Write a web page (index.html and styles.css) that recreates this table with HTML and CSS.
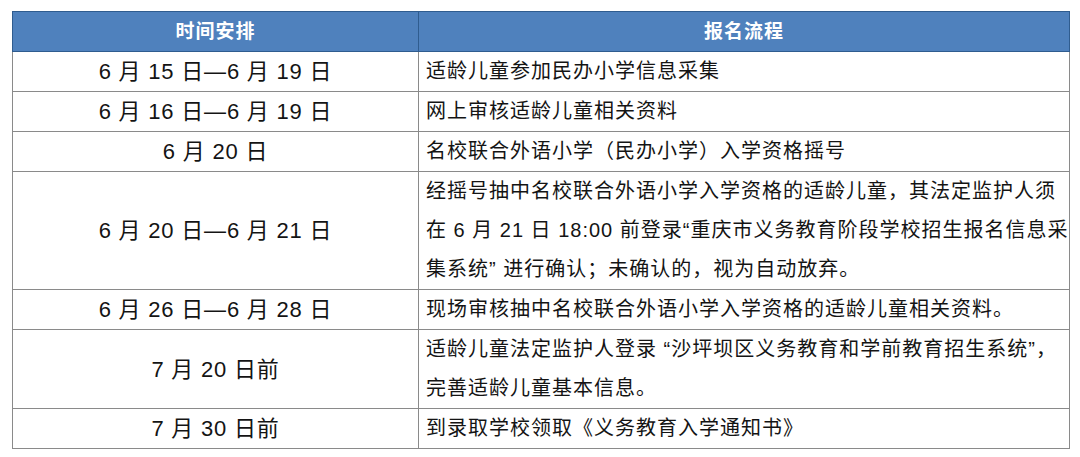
FILE: index.html
```html
<!DOCTYPE html>
<html lang="zh-CN">
<head>
<meta charset="utf-8">
<title>报名流程</title>
<link rel="stylesheet" href="styles.css">
</head>
<body>
<table class="schedule">
  <colgroup>
    <col class="col-time">
    <col class="col-flow">
  </colgroup>
  <thead>
    <tr>
      <th>时间安排</th>
      <th>报名流程</th>
    </tr>
  </thead>
  <tbody>
    <tr>
      <td class="time">6 月 15 日—6 月 19 日</td>
      <td class="flow">适龄儿童参加民办小学信息采集</td>
    </tr>
    <tr>
      <td class="time">6 月 16 日—6 月 19 日</td>
      <td class="flow">网上审核适龄儿童相关资料</td>
    </tr>
    <tr>
      <td class="time">6 月 20 日</td>
      <td class="flow">名校联合外语小学（民办小学）入学资格摇号</td>
    </tr>
    <tr>
      <td class="time">6 月 20 日—6 月 21 日</td>
      <td class="flow">经摇号抽中名校联合外语小学入学资格的适龄儿童，其法定监护人须<br>在 6 月 21 日 18:00 前登录“重庆市义务教育阶段学校招生报名信息采<br>集系统” 进行确认；未确认的，视为自动放弃。</td>
    </tr>
    <tr>
      <td class="time">6 月 26 日—6 月 28 日</td>
      <td class="flow">现场审核抽中名校联合外语小学入学资格的适龄儿童相关资料。</td>
    </tr>
    <tr>
      <td class="time">7 月 20 日前</td>
      <td class="flow">适龄儿童法定监护人登录 “沙坪坝区义务教育和学前教育招生系统”，<br>完善适龄儿童基本信息。</td>
    </tr>
    <tr>
      <td class="time">7 月 30 日前</td>
      <td class="flow">到录取学校领取《义务教育入学通知书》</td>
    </tr>
  </tbody>
</table>
</body>
</html>
```

FILE: styles.css
```css
html, body {
  margin: 0;
  padding: 0;
  background: #ffffff;
}

body {
  padding: 11px 0 0 12px;
  font-family: "Liberation Sans", "Noto Sans CJK SC", sans-serif;
  color: #141414;
}

.schedule {
  border-collapse: collapse;
  width: 1057px;
  table-layout: fixed;
}

.col-time {
  width: 406px;
}

.col-flow {
  width: 651px;
}

.schedule th {
  background: #4f81bd;
  color: #ffffff;
  font-weight: bold;
  font-size: 19px;
  letter-spacing: 1px;
  line-height: 39px;
  height: 39px;
  padding: 0;
  text-align: center;
  border: 1px solid #2f5c8f;
}

.schedule td {
  border: 1px solid #8a8a8a;
  padding: 0;
  font-size: 20px;
  line-height: 39px;
  vertical-align: middle;
}

.schedule td.time {
  text-align: center;
  font-size: 22px;
  letter-spacing: 0.8px;
}

.schedule td.flow {
  padding-left: 7px;
  letter-spacing: 1px;
  white-space: nowrap;
}
```
